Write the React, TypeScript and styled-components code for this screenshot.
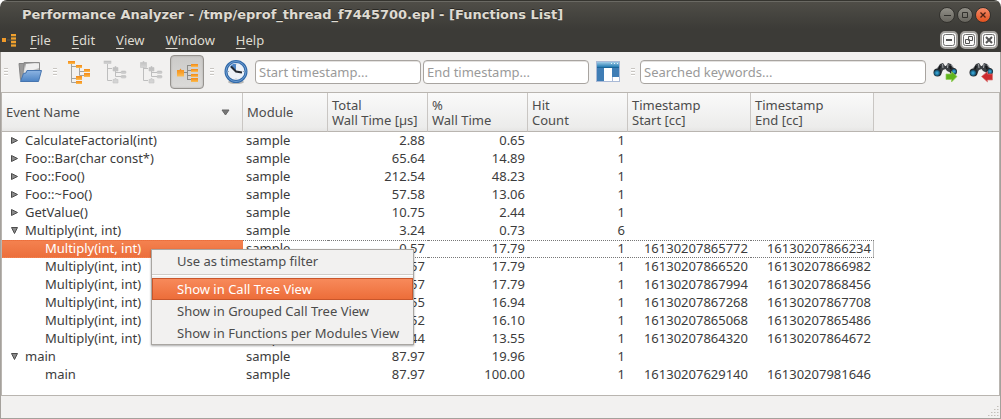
import React from 'react';
import styled, { createGlobalStyle, css } from 'styled-components';

const GlobalStyle = createGlobalStyle`
  * { box-sizing: border-box; }
  body {
    margin: 0;
    background: #fff;
    color: #3c3c3c;
    font: 13px/16px 'Noto Sans', 'Open Sans', sans-serif;
  }
  button, input { font: inherit; color: inherit; }
  button { margin: 0; padding: 0; border: 0; background: none; }
  svg { flex: none; }
`;

const AppWindow = styled.div`
  position: relative;
  display: flex;
  flex-direction: column;
  min-height: 100vh;
  background: #f2f1f0;
  border-radius: 7px 7px 0 0;
  overflow: hidden;
  &::after {
    content: '';
    position: absolute;
    inset: 52px 0 0;
    border: solid #a5a19c;
    border-width: 0 1px 1px;
    pointer-events: none;
  }
`;

const Chrome = styled.header`
  height: 52px;
  background: linear-gradient(#504e48, #45443f 14px, #3c3b37 28px);
  border-top: 1px solid #35342f;
  box-shadow: inset 0 1px #6a6963;
  color: #dfdbd2;
`;

const TitleBar = styled.div`
  display: flex;
  align-items: center;
  justify-content: space-between;
  height: 27px;
  padding: 0 10px 0 22px;
`;

const Title = styled.h1`
  margin: 0;
  font: bold 13px/16px 'DejaVu Sans', sans-serif;
  text-shadow: 0 -1px #2a2925;
  white-space: nowrap;
`;

const WindowButtons = styled.div`
  display: flex;
  gap: 2px;
`;

const RoundButton = styled.button<{ $close?: boolean }>`
  display: flex;
  width: 16px;
  height: 16px;
  border-radius: 50%;
  border: 1px solid #33322e;
  background: ${p => (p.$close ? 'linear-gradient(#f58a68, #e2521f)' : 'linear-gradient(#918f87, #66645d)')};
`;

const MenuBar = styled.nav`
  display: flex;
  align-items: center;
  height: 24px;
  padding: 0 3px 0 2px;
`;

const MenuItems = styled.div`
  display: flex;
  flex: 1;
  gap: 21px;
  padding-left: 14px;
`;

const Mnemonic = styled.span`
  text-decoration: underline;
  text-underline-offset: 3px;
`;

const ChildButton = styled.button`
  display: flex;
  align-items: center;
  justify-content: center;
  width: 18px;
  height: 18px;
  border: 2px solid #a3a19d;
  border-radius: 5px;
  background: #fbfbfa;
`;

const Toolbar = styled.div`
  display: flex;
  align-items: center;
  gap: 2px;
  height: 40px;
  padding: 0 3px 0 0;
`;

const Grip = styled.span`
  flex: none;
  width: 11px;
  height: 8px;
  border: solid transparent;
  border-width: 0 3px 0 4px;
  background: repeating-linear-gradient(#c9c6c2 0 1px, #fff 1px 2px, transparent 2px 3px) padding-box;
`;

const ToolButton = styled.button<{ $active?: boolean }>`
  display: flex;
  flex: none;
  align-items: center;
  justify-content: center;
  width: 34px;
  height: 34px;
  border: 1px solid transparent;
  border-radius: 4px;
  ${p =>
    p.$active &&
    css`
      border-color: #96938f;
      background: linear-gradient(#cbcac8, #dcdbd9);
      box-shadow: inset 0 0 2px #a5a3a0;
    `}
`;

const TextBox = styled.input<{ $grow?: boolean }>`
  flex: ${p => (p.$grow ? '1 1 0' : '0 1 166px')};
  min-width: 0;
  height: 24px;
  padding: 0 3px;
  border: 1px solid #a8a4a0;
  border-radius: 4px;
  background: #fff;
  box-shadow: inset 0 1px #e4e2e0;
  &::placeholder { color: #9a9a9a; opacity: 1; }
`;

const TableFrame = styled.main`
  position: relative;
  flex: 1;
  margin: 0 1px;
  padding-bottom: 10px;
  border: 1px solid #b9b5b0;
  background: #fff;
`;

const DataTable = styled.table`
  width: 100%;
  table-layout: fixed;
  border-spacing: 0;
`;

const Heading = styled.th<{ $twoLine?: boolean }>`
  height: 39px;
  padding: ${p => (p.$twoLine ? '2px 4px 0' : '0 4px')};
  border-right: 1px solid #c9c6c3;
  border-bottom: 1px solid #b9b5b0;
  background: linear-gradient(#fafafa, #ececeb 90%, #e6e5e4);
  color: #4c4c4c;
  font-weight: normal;
  line-height: 15px;
  text-align: left;
  white-space: pre;
  &:last-child { border-right: 0; background: #f2f1f0; }
`;

const SortHeading = styled.span`
  display: flex;
  align-items: center;
  justify-content: space-between;
  padding-right: 8px;
`;

const Cell = styled.td<{ $num?: boolean; $selected?: boolean }>`
  height: 18px;
  padding: 0 3px 2px;
  border: 0 dotted ${p => (p.$selected ? '#777' : 'transparent')};
  border-width: 1px 0;
  line-height: 14px;
  white-space: nowrap;
  text-align: ${p => (p.$num ? 'right' : 'left')};
  &:last-child { border-color: transparent; }
  &:nth-last-child(2) { box-shadow: ${p => (p.$selected ? 'inset -1px 0 #bbb' : 'none')}; }
`;

const NameCell = styled(Cell)<{ $child?: boolean }>`
  padding-left: ${p => (p.$child ? 43 : 8)}px;
  ${p =>
    p.$selected &&
    css`
      border-color: #ee7542;
      background: linear-gradient(#f4814f, #ec6f3c);
      color: #fff;
    `}
`;

const NameLine = styled.div`
  display: flex;
  align-items: center;
`;

const Expander = styled.button`
  display: flex;
  width: 15px;
  height: 14px;
  align-items: center;
`;

const ContextMenu = styled.div`
  position: absolute;
  top: 156px;
  left: 149px;
  width: 263px;
  border: 1px solid #a9a6a2;
  background: #f2f1f0;
  box-shadow: 0 1px 2px rgba(0, 0, 0, 0.35);
  color: #4c4c4c;
`;

const ContextItem = styled.button<{ $active?: boolean }>`
  display: block;
  width: 100%;
  height: 22px;
  padding: 0 14px 0 25px;
  text-align: left;
  white-space: nowrap;
  ${p =>
    p.$active &&
    css`
      color: #fff;
      background: linear-gradient(#f88b5c, #ec6c38);
      box-shadow: inset 0 0 0 1px #c9562b;
    `}
`;

const Separator = styled.hr`
  height: 2px;
  margin: 2px 0;
  border: 0;
  background: linear-gradient(#d0cdc9 50%, #fff 50%);
`;

const StatusBar = styled.footer`
  display: flex;
  align-items: flex-end;
  justify-content: flex-end;
  height: 23px;
  padding: 0 2px 3px;
`;

const Icon = ({ w, h, children }: { w: number; h: number; children: React.ReactNode }) => (
  <svg width={w} height={h} viewBox={`0 0 ${w} ${h}`} fill="none" aria-hidden="true">
    {children}
  </svg>
);

const GradientDefs = styled.svg`
  position: absolute;
`;

const Gradients = () => (
  <GradientDefs width="0" height="0" aria-hidden="true">
    <defs>
      <linearGradient id="orange" x2="0" y2="1"><stop stopColor="#f28a1c" /><stop offset=".5" stopColor="#f8a02c" /><stop offset="1" stopColor="#fbbd55" /></linearGradient>
      <linearGradient id="grey" x2="0" y2="1"><stop stopColor="#bdbdbd" /><stop offset="1" stopColor="#d6d6d6" /></linearGradient>
      <linearGradient id="folder" x2="0" y2="1"><stop stopColor="#8db4e2" /><stop offset="1" stopColor="#4c83c4" /></linearGradient>
      <linearGradient id="paper" x2="1" y2="1"><stop stopColor="#777" /><stop offset=".4" stopColor="#e4e4e4" /><stop offset="1" stopColor="#9c9c9c" /></linearGradient>
      <linearGradient id="bar" x2="0" y2="1"><stop stopColor="#9fcbe6" /><stop offset="1" stopColor="#247bb3" /></linearGradient>
      <radialGradient id="lens"><stop stopColor="#3fb4e6" /><stop offset="1" stopColor="#12506f" /></radialGradient>
    </defs>
  </GradientDefs>
);

const FolderIcon = () => (
  <Icon w={24} h={22}>
    <path d="M1 2.500h5l1 2v14l-3 2-1.500-2z" fill="#9a9a9a" stroke="#858585" />
    <path d="M6 1.500h15.500v12H5z" fill="url(#paper)" stroke="#8c8c8c" />
    <path d="M8 3h13v4l-6 2H7z" fill="#efefef" />
    <path d="M9 9.500h14.500l-3 11H2.500l3-8 2.500-.5z" fill="url(#folder)" stroke="#4675af" />
  </Icon>
);

const CallTreeIcon = () => (
  <Icon w={24} h={24}>
    <path d="M4.500 3v19.500H9M4.500 6.500H9M4.500 18.500H9M12.500 8v3.500H17M12.500 11v4.500H17" stroke="#a3a39f" />
    <g fill="url(#orange)">
      <rect x="1" y="1" width="7" height="3" /><rect x="9" y="5" width="6" height="3" />
      <rect x="17" y="9" width="6" height="3" /><rect x="17" y="13" width="6" height="4" />
      <rect x="9" y="16" width="6" height="4" /><rect x="9" y="21" width="6" height="3" />
    </g>
  </Icon>
);

const GroupedTreeIcon = ({ module }: { module?: boolean }) => (
  <Icon w={24} h={24}>
    <path d="M4.500 4v16.500H9M4.500 8.500H9M12.500 10v6.500H18M12.500 12.500H18" stroke="#bebebe" />
    <g fill="url(#grey)" stroke="#c3c3c3" strokeWidth=".6">
      {module ? <path d="M1.500 2.500h2l1-1.500 1 1.500h2v5h-6z" /> : <rect x="1" y="1" width="7" height="2.500" />}
      <path d="M10 7.500h1.500l1-1.500 1 1.500H15V11h-5zM10 19.500h1.500l1-1.500 1 1.500H15V23h-5z" />
      <rect x="18" y="11" width="5" height="2.500" rx="1" /><rect x="18" y="15.500" width="5" height="2.500" rx="1" />
    </g>
  </Icon>
);

const FunctionsIcon = () => (
  <Icon w={24} h={22}>
    <path d="M9 11.500h3.500M12.500 4v15M12.500 4.500H16M12.500 9.500H16M12.500 14.500H16M12.500 18.500H16" stroke="#8c8c88" />
    <path d="M2 9h2.500L5.500 7.500l1 1.500H9v6.500H2z" fill="url(#orange)" />
    <g fill="url(#orange)">
      <rect x="16" y="3" width="7" height="3" /><rect x="16" y="8" width="7" height="3" />
      <rect x="16" y="13" width="7" height="3" /><rect x="16" y="17" width="7" height="4" />
    </g>
  </Icon>
);

const AppIcon = () => (
  <Icon w={14} h={14}>
    <path d="M5 7h5M9.500 1v12" stroke="#5a5850" />
    <path d="M0 5h4v4H0z" fill="#f09a2a" />
    <path d="M9 1h5v13H9z" fill="#6b5a35" />
    <path d="M9 2h5M9 5.500h5M9 9h5M9 12.500h5" stroke="#f0a02e" strokeWidth="2" />
  </Icon>
);

const ClockIcon = () => (
  <Icon w={24} h={24}>
    <ellipse cx="12" cy="22" rx="8" ry="2" fill="#b9b8b6" />
    <circle cx="12" cy="11.500" r="10" fill="#ecf1f7" stroke="#326aa9" strokeWidth="3" />
    <circle cx="12" cy="11.500" r="10" stroke="#6d9dd2" />
    <path d="M12 11.500 6 6.500 9 4h3z" fill="#4f86c6" />
    <path d="m7 6.500 5 5 6 1" stroke="#252b33" strokeWidth="2" />
    <path d="M12 3.500v1M12 18.500v1M4 11.500h1M19 11.500h1" stroke="#9aa5b1" />
  </Icon>
);

const ColumnsIcon = () => (
  <Icon w={24} h={22}>
    <path d="M0 0h24v21H0z" fill="#a9b9d6" />
    <path d="M1 1h22v5H1z" fill="url(#bar)" />
    <path d="M1 7h7v13H1z" fill="#3f7db5" />
    <path d="M8 7h8v13H8z" fill="#fff" />
    <path d="M16 7h7v9h-7z" fill="#3f7db5" />
    <path d="M17 16h6v4h-6z" fill="#fff" />
    <path d="M15 2.500h1M18 2.500h1M21 2.500h1" stroke="#e5f2fa" />
    <path d="M1 6.500h22" stroke="#1b6599" />
  </Icon>
);

const BinocularsIcon = ({ back }: { back?: boolean }) => (
  <Icon w={25} h={22}>
    <path d="M7 3 10 2l2 3h1l2-3 3 1 4 5-4 4-4-2-1.500-2-2.500 1-2 4-5-4z" fill="#3c4044" />
    <path d="M6 5 3.500 8.500M9.500 3l.5 4M18.500 4l3 4M15 3l-.5 4" stroke="#a5a9ad" />
    <path d="M7 5 6 8M17 5l1 3" stroke="#151719" strokeWidth="2" />
    <circle cx="4.500" cy="11.500" r="4" fill="#252a2e" /><circle cx="4" cy="12" r="3" fill="url(#lens)" />
    <circle cx="20.500" cy="10.500" r="3.500" fill="#252a2e" /><circle cx="21" cy="10.500" r="2.500" fill="url(#lens)" />
    {back ? (
      <path d="M12.500 15.500 18.500 10.500v2.500h5v6h-5v2z" fill="#cc2b2e" stroke="#dc7a78" strokeWidth=".7" />
    ) : (
      <path d="M24 15.500 18.500 10.500V13H13v5.500h5.500V21z" fill="#61b51c" stroke="#93cf5c" strokeWidth=".7" />
    )}
  </Icon>
);

type RowData = {
  name: string;
  child?: boolean;
  open?: boolean;
  selected?: boolean;
  values: string[];
};

const rows: RowData[] = [
  { name: 'CalculateFactorial(int)', values: ['2.88', '0.65', '1', '', ''] },
  { name: 'Foo::Bar(char const*)', values: ['65.64', '14.89', '1', '', ''] },
  { name: 'Foo::Foo()', values: ['212.54', '48.23', '1', '', ''] },
  { name: 'Foo::~Foo()', values: ['57.58', '13.06', '1', '', ''] },
  { name: 'GetValue()', values: ['10.75', '2.44', '1', '', ''] },
  { name: 'Multiply(int, int)', open: true, values: ['3.24', '0.73', '6', '', ''] },
  { name: 'Multiply(int, int)', child: true, selected: true, values: ['0.57', '17.79', '1', '16130207865772', '16130207866234'] },
  { name: 'Multiply(int, int)', child: true, values: ['0.57', '17.79', '1', '16130207866520', '16130207866982'] },
  { name: 'Multiply(int, int)', child: true, values: ['0.57', '17.79', '1', '16130207867994', '16130207868456'] },
  { name: 'Multiply(int, int)', child: true, values: ['0.55', '16.94', '1', '16130207867268', '16130207867708'] },
  { name: 'Multiply(int, int)', child: true, values: ['0.52', '16.10', '1', '16130207865068', '16130207865486'] },
  { name: 'Multiply(int, int)', child: true, values: ['0.44', '13.55', '1', '16130207864320', '16130207864672'] },
  { name: 'main', open: true, values: ['87.97', '19.96', '1', '', ''] },
  { name: 'main', child: true, values: ['87.97', '100.00', '1', '16130207629140', '16130207981646'] },
];

const columnWidths = [241, 85, 100, 100, 100, 123, 123];
const headings = ['Module', 'Total\nWall Time [µs]', '%\nWall Time', 'Hit\nCount', 'Timestamp\nStart [cc]', 'Timestamp\nEnd [cc]'];
const menus = ['File', 'Edit', 'View', 'Window', 'Help'];

const TreeRow = ({ row }: { row: RowData }) => (
  <tr>
    <NameCell $child={row.child} $selected={row.selected}>
      <NameLine>
        {!row.child && (
          <Expander aria-label={`Toggle ${row.name}`} aria-expanded={!!row.open}>
            <Icon w={9} h={9}>
              <path d={row.open ? 'M1.500 1.500h6l-3 6z' : 'M1.500 1.500l6 3-6 3z'} fill="#8a8a8a" stroke="#4c4c4c" />
            </Icon>
          </Expander>
        )}
        {row.name}
      </NameLine>
    </NameCell>
    <Cell $selected={row.selected}>sample</Cell>
    {row.values.map((v, i) => (
      <Cell key={i} $num $selected={row.selected}>{v}</Cell>
    ))}
    <Cell />
  </tr>
);

export default function App() {
  return (
    <AppWindow>
      <GlobalStyle />
      <Gradients />
      <Chrome>
        <TitleBar>
          <Title>Performance Analyzer - /tmp/eprof_thread_f7445700.epl - [Functions List]</Title>
          <WindowButtons>
            <RoundButton aria-label="Minimize"><Icon w={14} h={14}><path d="M4 7.500h7" stroke="#32312d" /></Icon></RoundButton>
            <RoundButton aria-label="Maximize"><Icon w={14} h={14}><path d="M4.500 4.500h5v5h-5z" stroke="#32312d" /></Icon></RoundButton>
            <RoundButton aria-label="Close" $close><Icon w={14} h={14}><path d="m4.500 4.500 5 5m0-5-5 5" stroke="#4a2114" strokeWidth="1.300" /></Icon></RoundButton>
          </WindowButtons>
        </TitleBar>
        <MenuBar>
          <AppIcon />
          <MenuItems>
            {menus.map(m => (
              <button key={m}><Mnemonic>{m[0]}</Mnemonic>{m.slice(1)}</button>
            ))}
          </MenuItems>
          <WindowButtons>
            <ChildButton aria-label="Minimize view"><Icon w={12} h={12}><rect x=".5" y=".5" width="11" height="11" rx="2" stroke="#6e6e6e" /><path d="M3 6h6" stroke="#555" strokeWidth="2" /></Icon></ChildButton>
            <ChildButton aria-label="Restore view"><Icon w={12} h={12}><rect x=".5" y=".5" width="11" height="11" rx="2" stroke="#6e6e6e" /><path d="M5.500 2.500h4v4h-4zM2.500 5.500h4v4h-4z" fill="#f4f3f2" stroke="#555" /></Icon></ChildButton>
            <ChildButton aria-label="Close view"><Icon w={12} h={12}><rect x=".5" y=".5" width="11" height="11" rx="2" stroke="#6e6e6e" /><path d="m3 3 6 6m0-6-6 6" stroke="#555" strokeWidth="2" /></Icon></ChildButton>
          </WindowButtons>
        </MenuBar>
      </Chrome>
      <Toolbar role="toolbar">
        <Grip />
        <ToolButton aria-label="Open"><FolderIcon /></ToolButton>
        <Grip />
        <ToolButton aria-label="Call tree view"><CallTreeIcon /></ToolButton>
        <ToolButton aria-label="Grouped call tree view" disabled><GroupedTreeIcon /></ToolButton>
        <ToolButton aria-label="Functions per modules view" disabled><GroupedTreeIcon module /></ToolButton>
        <ToolButton aria-label="Functions list" aria-pressed="true" $active><FunctionsIcon /></ToolButton>
        <Grip />
        <ToolButton aria-label="Timestamp filter"><ClockIcon /></ToolButton>
        <TextBox aria-label="Start timestamp" placeholder="Start timestamp..." />
        <TextBox aria-label="End timestamp" placeholder="End timestamp..." />
        <ToolButton aria-label="Columns"><ColumnsIcon /></ToolButton>
        <Grip />
        <TextBox $grow aria-label="Searched keywords" placeholder="Searched keywords..." />
        <ToolButton aria-label="Find next"><BinocularsIcon /></ToolButton>
        <ToolButton aria-label="Find previous"><BinocularsIcon back /></ToolButton>
      </Toolbar>
      <TableFrame>
        <DataTable>
          <colgroup>
            {columnWidths.map((w, i) => <col key={i} width={w} />)}
            <col />
          </colgroup>
          <thead>
            <tr>
              <Heading aria-sort="descending">
                <SortHeading>
                  Event Name
                  <Icon w={9} h={7}><path d="M1 1h7L4.500 6z" fill="#777" stroke="#666" /></Icon>
                </SortHeading>
              </Heading>
              {headings.map(h => <Heading key={h} $twoLine={h.includes('\n')}>{h}</Heading>)}
              <Heading />
            </tr>
          </thead>
          <tbody>
            {rows.map((r, i) => <TreeRow key={i} row={r} />)}
          </tbody>
        </DataTable>
        <ContextMenu role="menu">
          <ContextItem role="menuitem">Use as timestamp filter</ContextItem>
          <Separator />
          <ContextItem role="menuitem" $active>Show in Call Tree View</ContextItem>
          <ContextItem role="menuitem">Show in Grouped Call Tree View</ContextItem>
          <ContextItem role="menuitem">Show in Functions per Modules View</ContextItem>
        </ContextMenu>
      </TableFrame>
      <StatusBar>
        <Icon w={11} h={11}>
          <path d="M9 1.500h1.500M6 4.500h1.500M9 4.500h1.500M3 7.500h1.500M6 7.500h1.500M9 7.500h1.500M0 10.500h1.500M3 10.500h1.500M6 10.500h1.500M9 10.500h1.500" stroke="#c4c0bb" />
        </Icon>
      </StatusBar>
    </AppWindow>
  );
}
